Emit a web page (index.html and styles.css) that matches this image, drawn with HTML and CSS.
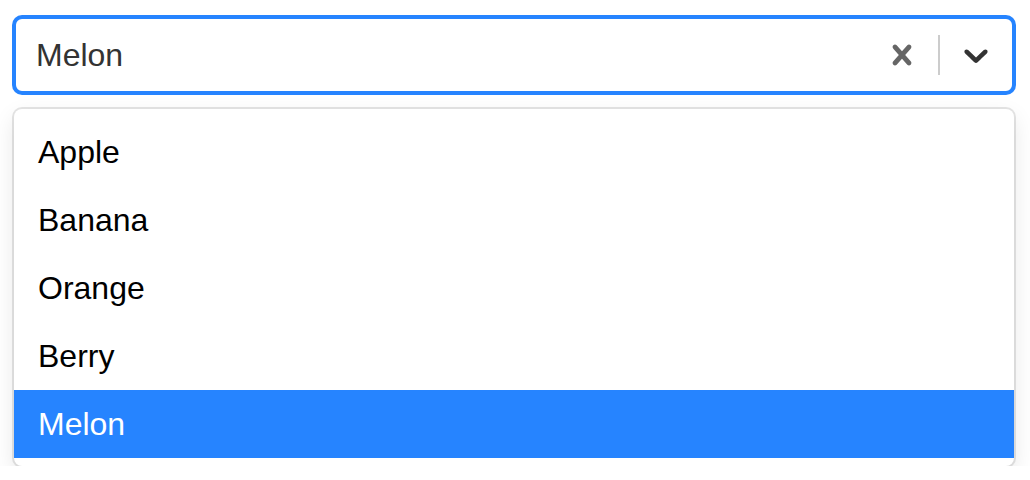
FILE: index.html
```html
<!DOCTYPE html>
<html>
<head>
<meta charset="utf-8">
<link rel="stylesheet" href="styles.css">
</head>
<body>
<div class="select">
  <div class="control">
    <div class="value-container">
      <div class="single-value">Melon</div>
    </div>
    <div class="indicators">
      <div class="indicator clear">
        <svg width="40" height="40" viewBox="0 0 20 20"><path d="M14.348 14.849c-0.469 0.469-1.229 0.469-1.697 0l-2.651-3.030-2.651 3.029c-0.469 0.469-1.229 0.469-1.697 0-0.469-0.469-0.469-1.229 0-1.697l2.758-3.15-2.759-3.152c-0.469-0.469-0.469-1.228 0-1.697s1.228-0.469 1.697 0l2.652 3.031 2.651-3.031c0.469-0.469 1.228-0.469 1.697 0s0.469 1.229 0 1.697l-2.758 3.152 2.758 3.15c0.469 0.469 0.469 1.229 0 1.698z"/></svg>
      </div>
      <span class="separator"></span>
      <div class="indicator dropdown">
        <svg width="40" height="40" viewBox="0 0 20 20"><path d="M4.516 7.548c0.436-0.446 1.043-0.481 1.576 0l3.908 3.747 3.908-3.747c0.533-0.481 1.141-0.446 1.574 0 0.436 0.445 0.408 1.197 0 1.615-0.406 0.418-4.695 4.502-4.695 4.502-0.217 0.223-0.502 0.335-0.787 0.335s-0.57-0.112-0.789-0.335c0 0-4.287-4.084-4.695-4.502s-0.436-1.17 0-1.615z"/></svg>
      </div>
    </div>
  </div>
  <div class="menu">
    <div class="option">Apple</div>
    <div class="option">Banana</div>
    <div class="option">Orange</div>
    <div class="option">Berry</div>
    <div class="option selected">Melon</div>
  </div>
</div>
</body>
</html>
```
FILE: styles.css
```css
html, body {
  margin: 0;
  background: #fff;
}
body {
  padding: 17px 0 0 14px;
  font-family: "Liberation Sans", Arial, sans-serif;
  font-size: 32px;
}
.select {
  width: 1000px;
  position: relative;
}
.control {
  display: flex;
  align-items: center;
  box-sizing: border-box;
  height: 76px;
  border: 2px solid #2684ff;
  border-radius: 8px;
  box-shadow: 0 0 0 2px #2684ff;
  background: #fff;
}
.value-container {
  flex: 1;
  padding: 4px 16px;
}
.single-value {
  margin: 0 4px;
  color: #333333;
  line-height: 40px;
}
.indicators {
  display: flex;
  align-items: stretch;
  align-self: stretch;
}
.indicator {
  display: flex;
  align-items: center;
  padding: 16px;
}
.indicator svg {
  display: block;
}
.clear svg { fill: #666666; }
.dropdown svg { fill: #333333; }
.separator {
  width: 2px;
  margin: 16px 0;
  background: #cccccc;
}
.menu {
  margin-top: 16px;
  padding: 9px 0 8px;
  border-radius: 8px;
  background: #fff;
  box-shadow: 0 0 0 2px rgba(0,0,0,0.1), 0 8px 22px rgba(0,0,0,0.1);
}
.option {
  padding: 16px 24px;
  line-height: 36px;
  color: #000;
}
.option.selected {
  background: #2684ff;
  color: #fff;
}
```
